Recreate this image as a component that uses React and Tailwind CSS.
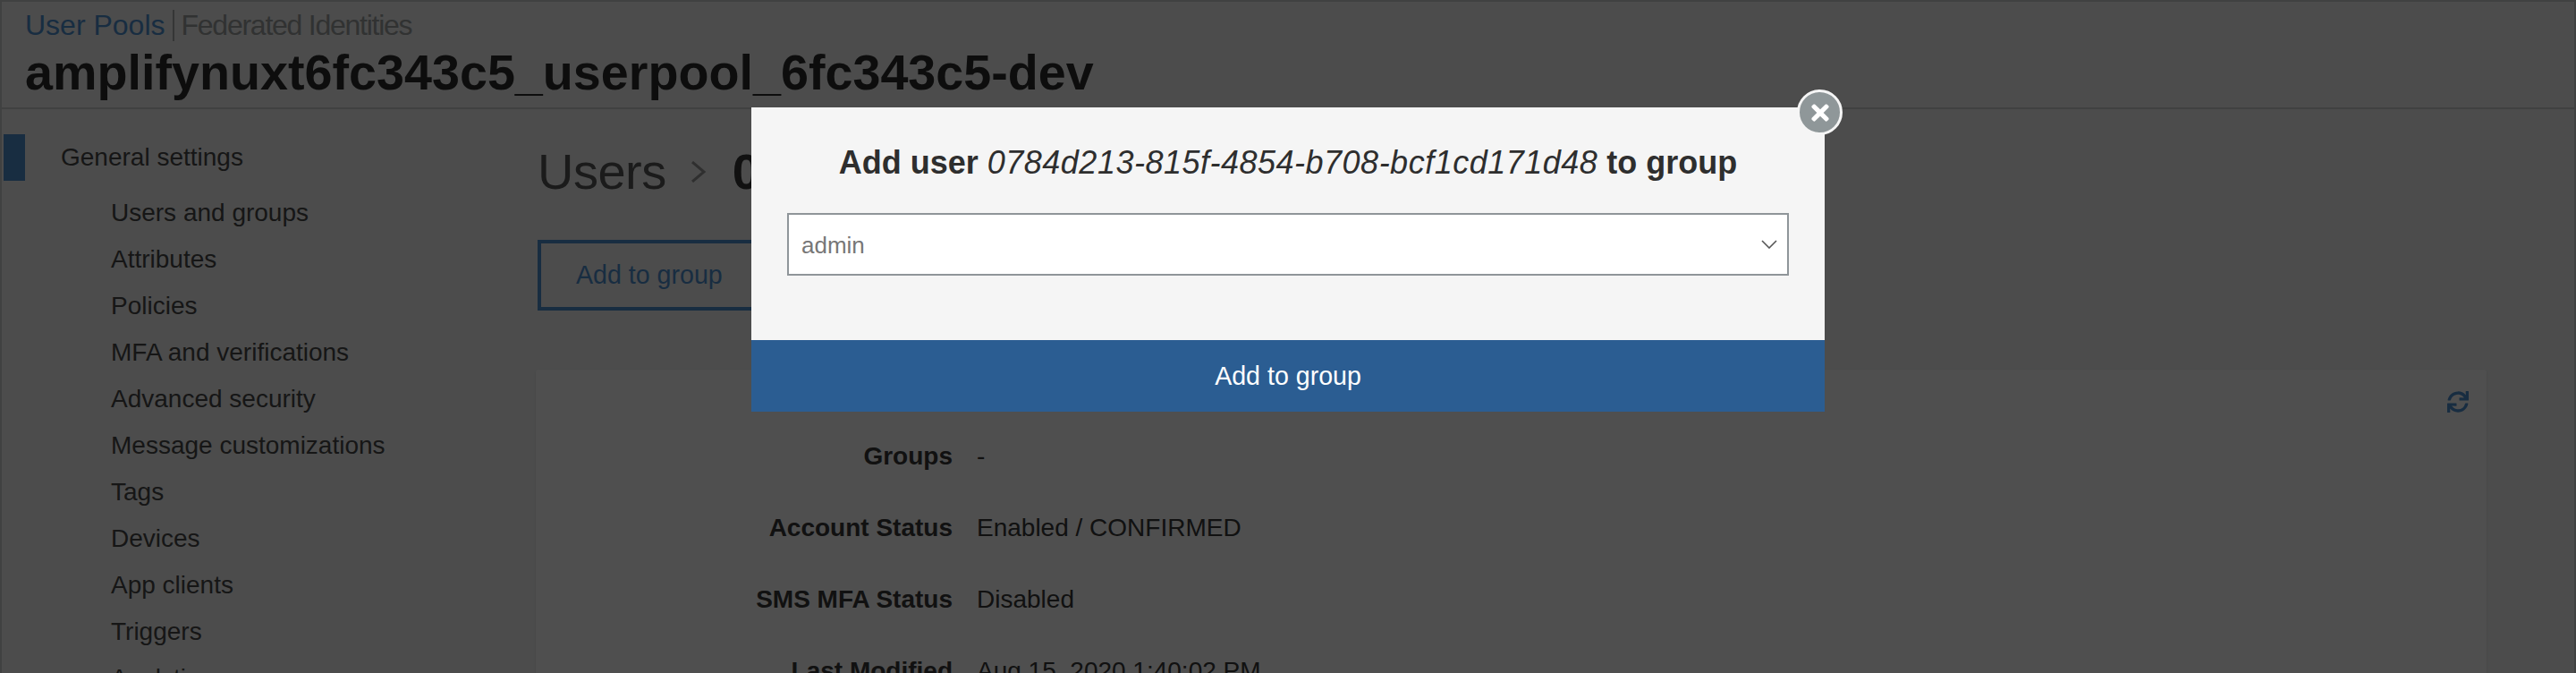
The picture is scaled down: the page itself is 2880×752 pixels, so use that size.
import React from 'react';
import { FaSync, FaTimes } from 'react-icons/fa';

const navItems = [
  'Users and groups',
  'Attributes',
  'Policies',
  'MFA and verifications',
  'Advanced security',
  'Message customizations',
  'Tags',
  'Devices',
  'App clients',
  'Triggers',
  'Analytics',
];

const userFields = [
  { label: 'Groups', value: '-' },
  { label: 'Account Status', value: 'Enabled / CONFIRMED' },
  { label: 'SMS MFA Status', value: 'Disabled' },
  { label: 'Last Modified', value: 'Aug 15, 2020 1:40:02 PM' },
];

const Header = () => (
  <header className="h-[120px] shrink-0 border-b-2 border-[#c0c3c3] pl-[26px]">
    <div className="flex h-[52px] items-center text-[32px] leading-none">
      <a className="text-[#3a7fc4]">User Pools</a>
      <span className="mx-[8px] h-[35px] w-[2px] bg-[#9a9e9e]" />
      <a className="text-[#8c9090] tracking-[-1.25px]">Federated Identities</a>
    </div>
    <h1 className="text-[55.7px] font-bold leading-[54px] text-[#161616]">amplifynuxt6fc343c5_userpool_6fc343c5-dev</h1>
  </header>
);

const Sidebar = () => (
  <nav className="w-[597px] shrink-0 pt-[28px] text-[28px] text-[#333]">
    <div className="flex h-[52px] items-center">
      <span className="ml-[2px] h-[52px] w-[24px] bg-[#3a7fc4]" />
      <span className="ml-[40px]">General settings</span>
    </div>
    <ul className="mt-[10px] pl-[122px]">
      {navItems.map((item) => (
        <li key={item} className="flex h-[52px] items-center">{item}</li>
      ))}
    </ul>
  </nav>
);

const UserDetail = () => (
  <main className="flex-1 pt-[42px]">
    <div className="ml-[2px] flex h-[56px] items-center whitespace-nowrap text-[56px] leading-none tracking-[-0.5px] text-[#444]">
      <span>Users</span>
      <svg className="ml-[27px] mr-[29px] h-[24px] w-[18px]" viewBox="0 0 18 24" fill="none" stroke="#888" strokeWidth="3">
        <path d="M2 1l13 11L2 23" />
      </svg>
      <b className="text-[#222]">0784d213-815f-4854-b708-bcf1cd171d48</b>
    </div>
    <button className="ml-[2px] mt-[48px] h-[79px] w-[260px] border-4 border-[#3a7fc4] pl-[39px] text-left text-[28.6px] text-[#3a7fc4]">
      Add to group
    </button>
    <section className="relative mt-[66px] mr-[98px] rounded-[3px] bg-[#f0f0f0] pt-[57px] shadow-sm text-[28px] text-[#222]">
      <FaSync className="absolute right-[20px] top-[24px] text-[#3a7fc4]" size={24} />
      {userFields.map((field) => (
        <div key={field.label} className="flex h-[80px] items-center">
          <span className="w-[466px] text-right font-bold">{field.label}</span>
          <span className="ml-[27px]">{field.value}</span>
        </div>
      ))}
    </section>
  </main>
);

const AddToGroupModal = () => (
  <div className="absolute inset-0 flex justify-center bg-[#0a0a0a]/70 pt-[120px]">
    <div className="relative h-[340px] w-[1200px] bg-[#f5f5f5]">
      <button className="absolute -right-[20px] -top-[20px] flex h-[51px] w-[51px] items-center justify-center rounded-full border-[3px] border-[#f5f5f5] bg-[#8f9799] text-white">
        <FaTimes size={28} />
      </button>
      <h2 className="mt-[40px] h-[44px] whitespace-nowrap text-center text-[36px] font-bold leading-[44px] text-[#2e2e2e]">
        Add user <i className="font-normal tracking-[0.5px]">0784d213-815f-4854-b708-bcf1cd171d48</i> to group
      </h2>
      <div className="relative mx-[40px] mt-[34px]">
        <select className="h-[70px] w-full appearance-none rounded-none border-2 border-[#8f9599] bg-white pl-[14px] pt-[2px] text-[26px] text-[#777] outline-none">
          <option>admin</option>
        </select>
        <svg className="pointer-events-none absolute right-[13px] top-[30px] h-[10px] w-[18px]" viewBox="0 0 18 10" fill="none" stroke="#555" strokeWidth="1.6">
          <path d="M1 1l8 8 8-8" />
        </svg>
      </div>
      <button className="mt-[72px] flex h-[80px] w-full items-center justify-center bg-[#2b5d92] text-[28.6px] text-white">
        Add to group
      </button>
    </div>
  </div>
);

const App = () => (
  <div className="relative h-[752px] w-full overflow-hidden font-['Liberation_Sans',Arial,sans-serif]">
    <div className="flex h-full flex-col border-x-2 border-t-2 border-x-[#c0c3c3] border-t-[#c0c3c3] bg-[#e6e8e8]">
      <Header />
      <div className="flex flex-1">
        <Sidebar />
        <UserDetail />
      </div>
    </div>
    <AddToGroupModal />
  </div>
);

export default App;
